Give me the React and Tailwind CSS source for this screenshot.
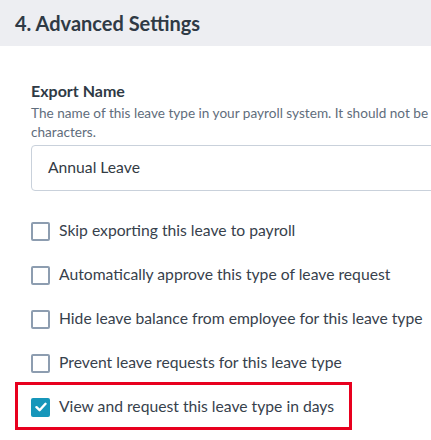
import React from 'react'

const options = [
  { label: 'Skip exporting this leave to payroll', checked: false },
  { label: 'Automatically approve this type of leave request', checked: false },
  { label: 'Hide leave balance from employee for this leave type', checked: false },
  { label: 'Prevent leave requests for this leave type', checked: false },
  { label: 'View and request this leave type in days', checked: true },
]

function Checkbox({ checked }) {
  if (checked) {
    return (
      <div className='w-[19px] h-[19px] rounded-[2px] bg-[#1696ba] flex items-center justify-center shrink-0'>
        <svg width="12" height="10" viewBox="0 0 12 10" fill="none">
          <path d="M1.5 5.2 L4.6 8.2 L10.5 1.8" stroke="white" strokeWidth="2.4" strokeLinecap="round" strokeLinejoin="round" />
        </svg>
      </div>
    )
  }
  return <div className='w-[19px] h-[19px] rounded-[2px] border-2 border-[#8d9db0] bg-white shrink-0' />
}

export default function App() {
  return (
    <div className='w-[431px] h-[440px] bg-white overflow-hidden relative' style={{ fontFamily: 'Lato, "Open Sans", sans-serif' }}>
      <div className='h-[46px] bg-[#edeef2] flex items-center pl-[15px]'>
        <h2 className='text-[20px] font-bold text-[#2f3a45] leading-none'>4. Advanced Settings</h2>
      </div>

      <div className='pl-[31px]'>
        <div className='mt-[35px] text-[16px] font-bold text-[#2f3a45] leading-[20px]'>Export Name</div>
        <p className='mt-[3px] text-[13.6px] text-[#5f6d7c] leading-[19px] whitespace-nowrap'>
          The name of this leave type in your payroll system. It should not be longer than 30
          <br />
          characters.
        </p>
        <div className='mt-[3px] h-[46px] w-[440px] border border-[#c9d1db] rounded-[4px] flex items-center pl-[16px] text-[15.7px] text-[#333b44]'>
          Annual Leave
        </div>

        <div className='mt-[18px] flex flex-col'>
          {options.map((o) => (
            <div key={o.label} className='h-[44px] flex items-center gap-[9px]'>
              <Checkbox checked={o.checked} />
              <span className='text-[15.7px] text-[#37414c] whitespace-nowrap'>{o.label}</span>
            </div>
          ))}
        </div>
      </div>

      <div className='absolute left-[15px] top-[382px] w-[337px] h-[48px] border-[3px] border-[#e8001e] pointer-events-none' />
    </div>
  )
}
